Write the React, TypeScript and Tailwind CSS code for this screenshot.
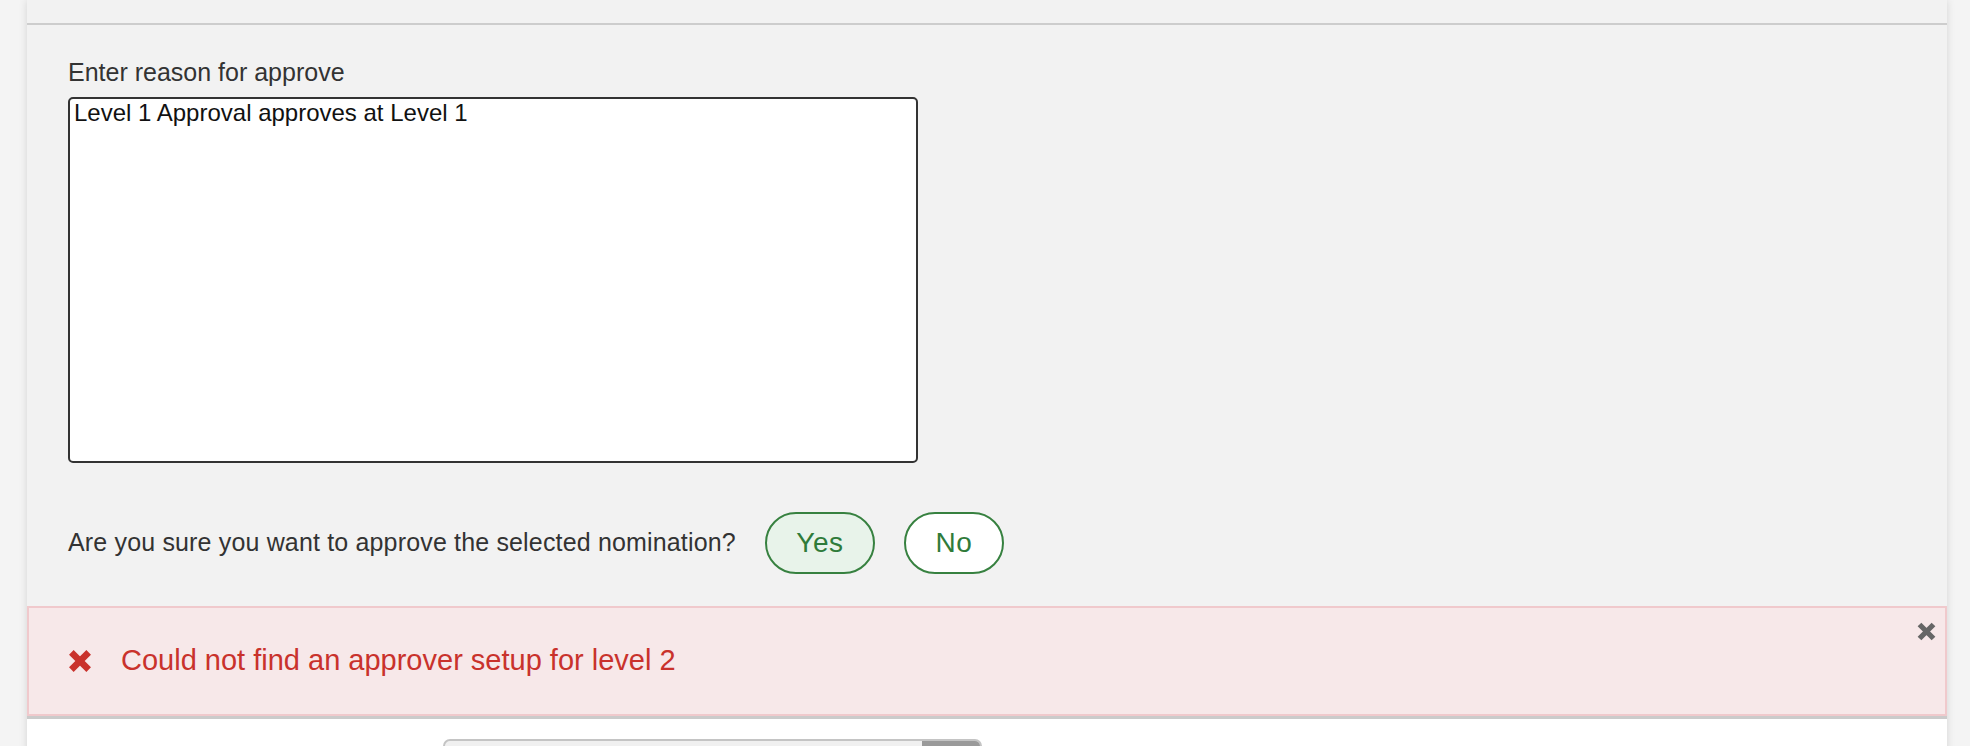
import { useState } from "react";

function TimesIcon({ className, stroke }: { className?: string; stroke: number }) {
  return (
    <svg viewBox="0 0 24 24" className={className} fill="none" aria-hidden="true">
      <path
        d="M4 4 L20 20 M20 4 L4 20"
        stroke="currentColor"
        strokeWidth={stroke}
        strokeLinecap="butt"
      />
    </svg>
  );
}

export default function App() {
  const [reason, setReason] = useState("Level 1 Approval approves at Level 1");
  const [showError, setShowError] = useState(true);

  return (
    <div className="min-h-screen overflow-hidden bg-[#f4f4f4] font-['Liberation_Sans',Arial,sans-serif]">
      <div className="ml-[27px] w-[1920px] bg-[#f2f2f2] shadow-[0_0_8px_rgba(0,0,0,0.13)]">
        {/* Header strip */}
        <div className="h-[25px] border-b-2 border-[#cdcdcd]" />

        {/* Form */}
        <div className="pl-[41px] pt-[33px] pb-[32px]">
          <label className="block text-[25px] leading-[29px] text-[#333]">
            Enter reason for approve
          </label>
          <textarea
            value={reason}
            onChange={(e) => setReason(e.target.value)}
            className="mt-[10px] block h-[366px] w-[850px] resize-none rounded-[5px] border-2 border-[#333] bg-white px-[4px] py-0 text-[24px] leading-[28px] text-[#111] outline-none"
          />

          <div className="mt-[49px] flex items-center">
            <span className="text-[25px] tracking-[0.16px] text-[#333]">
              Are you sure you want to approve the selected nomination?
            </span>
            <button className="ml-[29px] flex h-[62px] w-[110px] items-center justify-center rounded-full border-2 border-[#378140] bg-[#e8f3ea] text-[28px] tracking-[0.5px] text-[#2f7b3a]">
              Yes
            </button>
            <button className="ml-[29px] flex h-[62px] w-[100px] items-center justify-center rounded-full border-2 border-[#378140] bg-white text-[28px] tracking-[0.5px] text-[#2f7b3a]">
              No
            </button>
          </div>
        </div>

        {/* Error message */}
        {showError && (
          <div className="relative flex h-[110px] items-center border-2 border-[#f0c9cc] bg-[#f7e8e9] pl-[38px]">
            <TimesIcon className="h-[26px] w-[26px] text-[#c9322c]" stroke={6} />
            <span className="ml-[28px] text-[29px] text-[#c9322c]">
              Could not find an approver setup for level 2
            </span>
            <button
              onClick={() => setShowError(false)}
              className="absolute right-[8px] top-[13px] text-[#666]"
            >
              <TimesIcon className="h-[21px] w-[21px]" stroke={6} />
            </button>
          </div>
        )}
        <div className="h-[3px] bg-[#cbcbcb]" />

        {/* Next section */}
        <div className="bg-white pt-[20px] pb-[20px]">
          <div className="ml-[416px] flex h-[44px] w-[539px] overflow-hidden rounded-[7px] border-2 border-[#c4c4c4] bg-[#f0f0f0]">
            <div className="flex-1" />
            <div className="w-[58px] bg-[#9a9a9a]" />
          </div>
        </div>
      </div>
    </div>
  );
}
